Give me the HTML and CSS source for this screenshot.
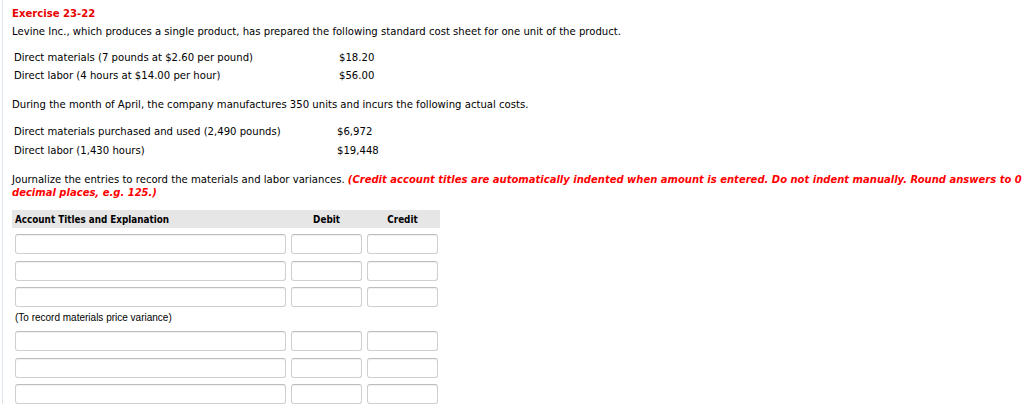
FILE: index.html
```html
<!DOCTYPE html>
<html>
<head>
<meta charset="utf-8">
<link rel="stylesheet" href="styles.css">
</head>
<body>
<div class="page">
  <div class="title">Exercise 23-22</div>
  <p class="intro">Levine Inc., which produces a single product, has prepared the following standard cost sheet for one unit of the product.</p>
  <div class="costs costs-std">
    <div class="label">Direct materials (7 pounds at $2.60 per pound)</div><div class="amt">$18.20</div>
    <div class="label">Direct labor (4 hours at $14.00 per hour)</div><div class="amt">$56.00</div>
  </div>
  <p class="para">During the month of April, the company manufactures 350 units and incurs the following actual costs.</p>
  <div class="costs costs-act">
    <div class="label">Direct materials purchased and used (2,490 pounds)</div><div class="amt">$6,972</div>
    <div class="label">Direct labor (1,430 hours)</div><div class="amt">$19,448</div>
  </div>
  <p class="instr">Journalize the entries to record the materials and labor variances. <span class="red">(Credit account titles are automatically indented when amount is entered. Do not indent manually. Round answers to 0<br>decimal places, e.g. 125.)</span></p>
  <div class="journal">
    <div class="jhead">
      <div class="h-acct">Account Titles and Explanation</div>
      <div class="h-num">Debit</div>
      <div class="h-num">Credit</div>
    </div>
    <div class="jrows">
      <div class="box"></div><div class="box"></div><div class="box"></div>
      <div class="box"></div><div class="box"></div><div class="box"></div>
      <div class="box"></div><div class="box"></div><div class="box"></div>
    </div>
    <div class="note">(To record materials price variance)</div>
    <div class="jrows">
      <div class="box"></div><div class="box"></div><div class="box"></div>
      <div class="box"></div><div class="box"></div><div class="box"></div>
      <div class="box"></div><div class="box"></div><div class="box"></div>
    </div>
  </div>
</div>
</body>
</html>
```

FILE: styles.css
```css
html, body {
  margin: 0;
  padding: 0;
  background: #fff;
}
body {
  font-family: "DejaVu Sans", Verdana, sans-serif;
  font-size: 10.1px;
  color: #000;
  height: 404px;
  overflow: hidden;
}
.page {
  margin-left: 2px;
  border-left: 1px solid #dce5ee;
  padding: 7px 0 0 9px;
  min-height: 500px;
}
.title {
  color: #e80000;
  font-weight: bold;
  line-height: 14px;
}
.intro {
  margin: 4px 0 0 0;
  line-height: 14px;
}
.costs {
  display: grid;
  row-gap: 5px;
  margin-top: 12px;
  padding-left: 2px;
  line-height: 14px;
}
.costs-std { grid-template-columns: 325px auto; row-gap: 4px; }
.costs-act { grid-template-columns: 323px auto; margin-top: 13px; }
.para {
  margin: 15px 0 0 0;
  line-height: 14px;
}
.instr {
  margin: 15px 0 0 0;
  line-height: 13px;
  white-space: nowrap;
}
.red {
  color: #f00;
  font-weight: bold;
  font-style: italic;
  font-size: 10px;
}
.journal {
  margin-top: 11px;
  width: 428px;
}
.jhead {
  display: grid;
  grid-template-columns: 271px 71px 71px;
  column-gap: 5px;
  padding: 0 2px 0 3px;
  height: 18px;
  align-items: center;
  background: #e6e6e6;
  font-family: "DejaVu Sans Condensed", "DejaVu Sans", sans-serif;
  font-stretch: condensed;
  font-weight: bold;
  font-size: 9.8px;
}
.h-num { text-align: center; }
.jrows {
  display: grid;
  grid-template-columns: 271px 71px 71px;
  column-gap: 5px;
  row-gap: 6.5px;
  padding: 6px 2px 0 3px;
}
.box {
  height: 20px;
  box-sizing: border-box;
  border: 1px solid #cfcfcf;
  border-top-color: #bdbdbd;
  border-radius: 3px;
  background: #fff;
  box-shadow: inset 0 1px 1px rgba(0,0,0,0.06);
}
.note {
  font-family: "Liberation Sans", Arial, sans-serif;
  font-size: 10px;
  line-height: 12px;
  padding: 5px 0 0 3px;
  margin-bottom: 1px;
}
```
